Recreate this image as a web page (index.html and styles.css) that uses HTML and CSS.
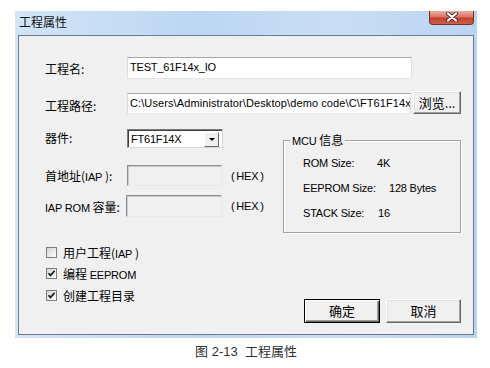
FILE: index.html
```html
<!DOCTYPE html>
<html lang="zh-CN">
  <head>
    <meta charset="UTF-8" />
    <meta name="viewport" content="width=device-width, initial-scale=1.0" />
    <title>工程属性</title>
    <link rel="stylesheet" href="styles.css">
  </head>
  <body>
    <div class="window">
      <div class="titlebar">
        <span class="title">工程属性</span>
        <span class="close">
          <svg width="14" height="10" viewBox="0 0 14 10">
            <path d="M3 1.5 L11 8.5 M11 1.5 L3 8.5" stroke="#4a2a26" stroke-width="4" stroke-linecap="round" />
            <path d="M3 1.5 L11 8.5 M11 1.5 L3 8.5" stroke="#fff" stroke-width="2.2" stroke-linecap="round" />
          </svg>
        </span>
      </div>
      <div class="client">
        <div class="row row-name">
          <span class="lbl">工程名:</span>
          <div class="edit edit-long lat">TEST_61F14x_IO</div>
        </div>
        <div class="row row-path">
          <span class="lbl">工程路径:</span>
          <div class="edit edit-long lat path">C:\Users\Administrator\Desktop\demo code\C\FT61F14x\IO</div>
          <button class="btn btn-browse">浏览...</button>
        </div>
        <div class="middle">
          <div class="left-col">
            <div class="row row-chip">
              <span class="lbl">器件:</span>
              <div class="combo">
                <span class="combo-text lat">FT61F14X</span>
                <span class="combo-btn"><span class="arrow"></span></span>
              </div>
            </div>
            <div class="row row-addr">
              <span class="lbl">首地址(<span class="lat">IAP</span> ):</span>
              <div class="edit edit-short"></div>
              <span class="hex lat">( HEX )</span>
            </div>
            <div class="row row-size">
              <span class="lbl"><span class="lat">IAP ROM</span> 容量:</span>
              <div class="edit edit-short edit-wide"></div>
              <span class="hex lat">( HEX )</span>
            </div>
          </div>
          <div class="group">
            <span class="legend"><span class="lat">MCU</span> 信息</span>
            <div class="info lat"><span class="key key-rom">ROM Size:</span><span>4K</span></div>
            <div class="info lat"><span class="key key-eeprom">EEPROM Size:</span><span>128 Bytes</span></div>
            <div class="info lat"><span class="key key-stack">STACK Size:</span><span>16</span></div>
          </div>
        </div>
        <div class="bottom">
          <div class="checks">
            <div class="check">
              <span class="box"></span>
              <span>用户工程(<span class="lat">IAP</span> )</span>
            </div>
            <div class="check">
              <span class="box">
                <svg width="9" height="9" viewBox="0 0 9 9"><path d="M1.5 4.2 L3.5 6.4 L7.6 1.8" fill="none" stroke="#1e1e1e" stroke-width="1.7" /></svg>
              </span>
              <span>编程 <span class="lat">EEPROM</span></span>
            </div>
            <div class="check check-last">
              <span class="box">
                <svg width="9" height="9" viewBox="0 0 9 9"><path d="M1.5 4.2 L3.5 6.4 L7.6 1.8" fill="none" stroke="#1e1e1e" stroke-width="1.7" /></svg>
              </span>
              <span>创建工程目录</span>
            </div>
          </div>
          <div class="actions">
            <button class="btn btn-action btn-default">确定</button>
            <button class="btn btn-action">取消</button>
          </div>
        </div>
      </div>
    </div>
    <p class="caption">图 2-13&nbsp; 工程属性</p>
  </body>
</html>
```

FILE: styles.css
```css
body {
  margin: 0;
  background: #fff;
  font-family: "Noto Sans CJK SC", "Liberation Sans", sans-serif;
  font-size: 12px;
  color: #000;
}
.lat {
  font-family: "Liberation Sans", "Noto Sans CJK SC", sans-serif;
  font-size: 11px;
  letter-spacing: -0.2px;
}
.window {
  width: 462px;
  margin: 11px 0 0 15px;
  padding-bottom: 3px;
  background: linear-gradient(to right, #d2e4f7, #bcd7f3 40%, #c9def5 70%, #b9d4f1);
}
.titlebar {
  height: 24px;
  display: flex;
  justify-content: space-between;
  align-items: flex-start;
}
.title {
  padding: 2px 0 0 4px;
  line-height: 18px;
  font-size: 12px;
  color: #111;
}
.close {
  width: 45px;
  height: 14px;
  margin-right: 3px;
  border: 1px solid #7a2f25;
  border-top: none;
  border-radius: 0 0 4px 4px;
  background: linear-gradient(#eab0a2, #d87564 45%, #c2412f 55%, #cf5e48);
  display: flex;
  justify-content: center;
  align-items: flex-start;
  padding-top: 1px;
  box-sizing: border-box;
}
.client {
  margin: 0 3px;
  height: 300px;
  box-sizing: border-box;
  border: 1px solid #6b7b8c;
  background: #f0f0f0;
  padding: 21px 12px 0 26px;
}
.row {
  display: flex;
  align-items: center;
}
.lbl {
  width: 82px;
  flex-shrink: 0;
  white-space: nowrap;
}
.row-name {
  height: 22px;
}
.row-path {
  height: 23px;
  margin-top: 12px;
  align-items: flex-end;
}
.edit {
  box-sizing: border-box;
  height: 22px;
  border: 1px solid;
  border-color: #a5a7ab #dcdfe4 #e3e6ea #d9dce1;
  background: #fff;
  padding-left: 2px;
  line-height: 19px;
  white-space: nowrap;
  overflow: hidden;
}
.edit-long {
  width: 285px;
}
.row-path .edit {
  height: 21px;
}
.path {
  letter-spacing: 0.1px;
}
.btn {
  box-sizing: border-box;
  font-family: inherit;
  font-size: 13px;
  color: #000;
  background: #f0f0f0;
  border: 1px solid;
  border-color: #fff #696969 #696969 #fff;
  box-shadow: inset -1px -1px 0 #a0a0a0, inset 1px 1px 0 #e3e3e3;
  padding: 0;
  line-height: 20px;
}
.btn-browse {
  width: 48px;
  height: 23px;
  margin-left: 2px;
}
.middle {
  display: flex;
  margin-top: 15px;
}
.left-col {
  width: 238px;
  flex-shrink: 0;
}
.row-chip {
  height: 20px;
  align-items: flex-start;
}
.combo {
  box-sizing: border-box;
  width: 96px;
  height: 19px;
  border: 1px solid;
  border-color: #7a7a7a #d6d6d6 #d6d6d6 #7a7a7a;
  box-shadow: inset 1px 1px 0 #404040;
  background: #fff;
  display: flex;
  align-items: center;
  justify-content: space-between;
  padding: 1px 3px 0 3px;
}
.combo-text {
  line-height: 16px;
}
.combo-btn {
  box-sizing: border-box;
  width: 15px;
  height: 15px;
  background: #f0f0f0;
  border: 1px solid;
  border-color: #fff #696969 #696969 #fff;
  display: flex;
  align-items: center;
  justify-content: center;
}
.arrow {
  width: 0;
  height: 0;
  border-left: 3px solid transparent;
  border-right: 3px solid transparent;
  border-top: 3px solid #000;
  margin-top: 1px;
}
.row-addr {
  height: 21px;
  margin-top: 16px;
}
.row-size {
  height: 22px;
  margin-top: 9px;
}
.edit-short {
  width: 95px;
  height: 21px;
  background: #f0f0f0;
  border-color: #8f8f8f #e8e8e8 #e8e8e8 #8f8f8f;
  box-shadow: inset 1px 1px 0 #c9c9c9;
}
.edit-wide {
  width: 96px;
  height: 22px;
  margin-left: -1px;
}
.hex {
  margin-left: 9px;
  white-space: nowrap;
  word-spacing: -1px;
}
.group {
  position: relative;
  box-sizing: border-box;
  width: 178px;
  height: 93px;
  margin-top: 11px;
  border: 1px solid #a0a0a0;
  box-shadow: inset 1px 1px 0 #fff, 1px 1px 0 #fff;
  padding: 9px 0 7px 19px;
}
.legend {
  position: absolute;
  left: 6px;
  top: -10px;
  padding: 0 2px;
  background: #f0f0f0;
  line-height: 18px;
}
.info {
  height: 25px;
  display: flex;
  align-items: center;
}
.key-rom {
  width: 74px;
}
.key-eeprom {
  width: 86px;
}
.key-stack {
  width: 75px;
}
.bottom {
  display: flex;
  justify-content: space-between;
  height: 81px;
  margin-top: 9px;
}
.checks {
  align-self: flex-start;
}
.check {
  height: 21px;
  display: flex;
  align-items: center;
}
.check-last {
  height: 22px;
}
.box {
  box-sizing: border-box;
  width: 11px;
  height: 11px;
  margin: 0 6px 0 1px;
  border: 1px solid #7c7c7c;
  background: linear-gradient(135deg, #d4d4d4, #fff);
  display: flex;
  align-items: center;
  justify-content: center;
}
.actions {
  align-self: flex-end;
  display: flex;
  gap: 6px;
}
.btn-action {
  width: 75px;
  height: 24px;
}
.btn-default {
  width: 76px;
  border-color: #000;
  box-shadow: inset 1px 1px 0 #fff, inset -1px -1px 0 #696969, inset -2px -2px 0 #a0a0a0;
}
.caption {
  margin: 5px 0 0;
  text-align: center;
  padding-left: 2px;
  font-family: "Liberation Sans", "Noto Sans CJK SC", sans-serif;
  font-size: 13px;
  line-height: 18px;
  color: #333;
}
```
